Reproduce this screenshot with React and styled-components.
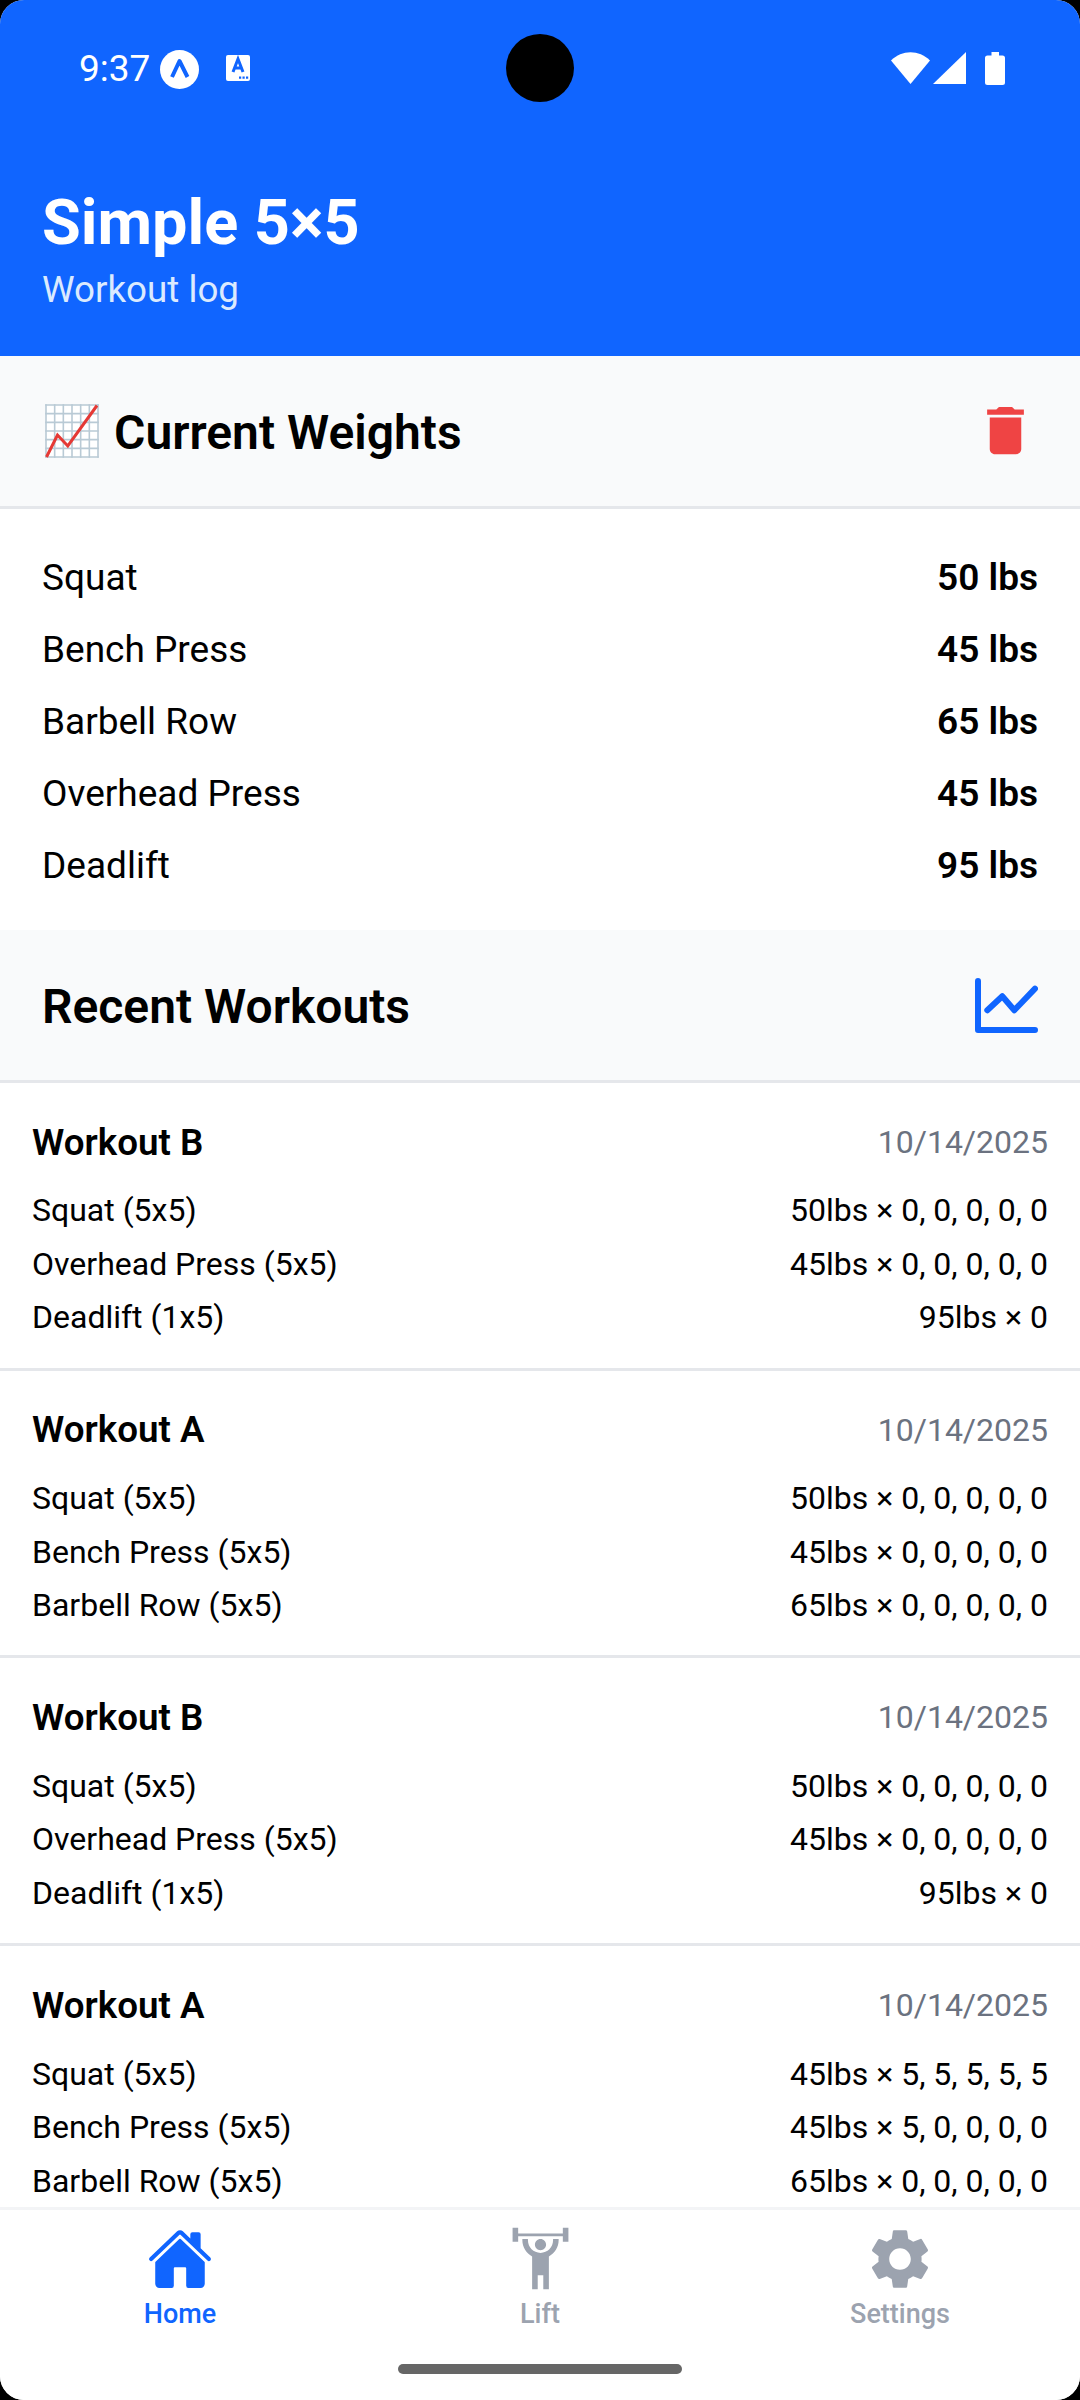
import React from "react";
import styled, { createGlobalStyle } from "styled-components";
import { IoHome } from "react-icons/io5";
import { MdDelete, MdSettings } from "react-icons/md";

const GlobalStyle = createGlobalStyle`
  html, body {
    margin: 0;
    padding: 0;
    background: #000;
  }
  * {
    box-sizing: border-box;
  }
`;

const weights = [
  { name: "Squat", value: "50 lbs" },
  { name: "Bench Press", value: "45 lbs" },
  { name: "Barbell Row", value: "65 lbs" },
  { name: "Overhead Press", value: "45 lbs" },
  { name: "Deadlift", value: "95 lbs" },
];

const workouts = [
  {
    title: "Workout B",
    rows: [
      ["Squat (5x5)", "50lbs × 0, 0, 0, 0, 0"],
      ["Overhead Press (5x5)", "45lbs × 0, 0, 0, 0, 0"],
      ["Deadlift (1x5)", "95lbs × 0"],
    ],
  },
  {
    title: "Workout A",
    rows: [
      ["Squat (5x5)", "50lbs × 0, 0, 0, 0, 0"],
      ["Bench Press (5x5)", "45lbs × 0, 0, 0, 0, 0"],
      ["Barbell Row (5x5)", "65lbs × 0, 0, 0, 0, 0"],
    ],
  },
  {
    title: "Workout B",
    rows: [
      ["Squat (5x5)", "50lbs × 0, 0, 0, 0, 0"],
      ["Overhead Press (5x5)", "45lbs × 0, 0, 0, 0, 0"],
      ["Deadlift (1x5)", "95lbs × 0"],
    ],
  },
  {
    title: "Workout A",
    rows: [
      ["Squat (5x5)", "45lbs × 5, 5, 5, 5, 5"],
      ["Bench Press (5x5)", "45lbs × 5, 0, 0, 0, 0"],
      ["Barbell Row (5x5)", "65lbs × 0, 0, 0, 0, 0"],
    ],
  },
];

const ChartEmoji = () => {
  const lines = [1, 9.67, 18.33, 27, 35.67, 44.33, 53];
  return (
    <svg width="54" height="54" viewBox="0 0 54 54">
      <rect x="1" y="1" width="52" height="52" fill="#fff" />
      {lines.map((p) => (
        <g key={p} stroke="#b9cad5" strokeWidth="1.6">
          <line x1={p} y1="0.2" x2={p} y2="53.8" />
          <line x1="0.2" y1={p} x2="53.8" y2={p} />
        </g>
      ))}
      <path d="M1.500 53 L12.500 31 L22.800 42 L52 1.500" fill="none" stroke="#e53935" strokeWidth="3" />
    </svg>
  );
};

const TrendIcon = () => (
  <svg width="63" height="55" viewBox="0 0 63 55" fill="none" stroke="#1065ff" strokeWidth="6" strokeLinecap="round" strokeLinejoin="round">
    <path d="M3 3 V52 H60" />
    <path d="M12.300 32.300 L27.300 18.300 L39.300 32.300 L60 10.600" />
  </svg>
);

const LifterIcon = ({ color }) => (
  <svg width="67" height="67" viewBox="0 0 24 24" fill={color}>
    <path d="M12 5C10.89 5 10 5.89 10 7S10.89 9 12 9 14 8.11 14 7 13.11 5 12 5M22 1V6H20V4H4V6H2V1H4V3H20V1H22M15 11.26V23H13V18H11V23H9V11.26C6.93 10.17 5.5 8 5.5 5.5L5.5 5H7.5L7.5 5.5C7.5 8 9.5 10 12 10S16.5 8 16.5 5.5L16.5 5H18.5L18.5 5.5C18.5 8 17.07 10.17 15 11.26Z" />
  </svg>
);

const ExpoBadge = () => (
  <BadgeSvg width="39" height="39" viewBox="0 0 39 39">
    <circle cx="19.500" cy="19.500" r="19.500" fill="#fff" />
    <path d="M12 27 L19.500 11 L27.500 27" fill="none" stroke="#1065ff" strokeWidth="4" strokeLinejoin="round" />
  </BadgeSvg>
);

const KeyboardBadge = () => (
  <svg width="24" height="26" viewBox="0 0 24 26">
    <rect width="24" height="26" rx="2" fill="#fff" />
    <path d="M7 17 L12 4 L17 17 M9 13 H15" fill="none" stroke="#1065ff" strokeWidth="3" />
    <path d="M13 21.500h2.200v2.200h-2.200zM16.500 21.500h2.200v2.200h-2.200zM20 21.500h2.200v2.200h-2.200z" fill="#1065ff" />
  </svg>
);

const SignalIcons = () => (
  <svg width="114" height="33" viewBox="0 0 114 33">
    <path d="M0 8.500 C 11 -2.500 28 -2.500 39 8.500 L19.500 32 Z" fill="#fff" />
    <path d="M42 32 L75 0 V32 Z" fill="#fff" />
    <path d="M94 6 a2.500 2.500 0 0 1 2.500 -2.500 h4 v-3.500 h7.500 v3.500 h3.500 a2.500 2.500 0 0 1 2.500 2.500 v24.500 a2.500 2.500 0 0 1 -2.500 2.500 h-15 a2.500 2.500 0 0 1 -2.500 -2.500 Z" fill="#fff" />
  </svg>
);

const App = () => {
  return (
    <Screen>
      <GlobalStyle />
      <Header>
        <StatusBar>
          <StatusLeft>
            <Clock>9:37</Clock>
            <ExpoBadge />
            <KeyboardSlot>
              <KeyboardBadge />
            </KeyboardSlot>
          </StatusLeft>
          <Camera />
          <SignalIcons />
        </StatusBar>
        <Title>Simple 5×5</Title>
        <Subtitle>Workout log</Subtitle>
      </Header>

      <Main>
        <SectionHeader>
          <SectionTitle>
            <EmojiSlot>
              <ChartEmoji />
            </EmojiSlot>
            <TitleText>Current Weights</TitleText>
          </SectionTitle>
          <TrashButton>
            <MdDelete size={63} color="#ef4444" />
          </TrashButton>
        </SectionHeader>
        <WeightList>
          {weights.map((w) => (
            <WeightRow key={w.name}>
              <span>{w.name}</span>
              <WeightValue>{w.value}</WeightValue>
            </WeightRow>
          ))}
        </WeightList>

        <SectionHeader>
          <SectionTitle>
            <TitleText>Recent Workouts</TitleText>
          </SectionTitle>
          <TrendIcon />
        </SectionHeader>
        {workouts.map((workout, i) => (
          <WorkoutCard key={i}>
            <CardTop>
              <CardTitle>{workout.title}</CardTitle>
              <CardDate>10/14/2025</CardDate>
            </CardTop>
            {workout.rows.map(([name, sets]) => (
              <SetRow key={name}>
                <span>{name}</span>
                <span>{sets}</span>
              </SetRow>
            ))}
          </WorkoutCard>
        ))}
      </Main>

      <TabBar>
        <Tab>
          <TabIcon>
            <IoHome size={66} color="#1065ff" />
          </TabIcon>
          <TabLabel $active>Home</TabLabel>
        </Tab>
        <Tab>
          <TabIcon>
            <LifterIcon color="#9ca3af" />
          </TabIcon>
          <TabLabel>Lift</TabLabel>
        </Tab>
        <Tab>
          <TabIcon>
            <MdSettings size={72} color="#9ca3af" />
          </TabIcon>
          <TabLabel>Settings</TabLabel>
        </Tab>
      </TabBar>
      <HomeArea>
        <HomeIndicator />
      </HomeArea>
    </Screen>
  );
};

const Screen = styled.div`
  width: 1080px;
  height: 2400px;
  display: flex;
  flex-direction: column;
  overflow: hidden;
  background: #fff;
  border-radius: 24px;
  font-family: Roboto, "Noto Sans", sans-serif;
  color: #000;
`;

const Header = styled.header`
  height: 356px;
  flex-shrink: 0;
  background: #1065ff;
  padding: 34px 42px 0;
  color: #fff;
`;

const StatusBar = styled.div`
  position: relative;
  height: 68px;
  display: flex;
  align-items: center;
  justify-content: space-between;
  padding: 0 33px 0 37px;
  margin-bottom: 88px;
`;

const StatusLeft = styled.div`
  display: flex;
  align-items: center;
  gap: 10px;
`;

const BadgeSvg = styled.svg`
  margin-top: 2px;
`;

const Clock = styled.span`
  font-size: 37px;
  font-weight: 400;
`;

const KeyboardSlot = styled.span`
  display: flex;
  margin-left: 17px;
`;

const Camera = styled.div`
  position: absolute;
  left: 464px;
  top: 0;
  width: 68px;
  height: 68px;
  border-radius: 50%;
  background: #000;
`;

const Title = styled.h1`
  margin: 0;
  font-size: 63px;
  line-height: 66px;
  font-weight: 700;
`;

const Subtitle = styled.p`
  margin: 10px 0 0;
  font-size: 36.75px;
  line-height: 48px;
  color: #dbeafe;
`;

const Main = styled.main`
  flex: 1;
  min-height: 0;
  overflow: hidden;
`;

const SectionHeader = styled.div`
  height: 153px;
  display: flex;
  align-items: center;
  justify-content: space-between;
  padding: 0 42px;
  background: #f9fafb;
  border-bottom: 3px solid #e5e7eb;
`;

const SectionTitle = styled.h2`
  margin: 0;
  display: flex;
  align-items: center;
  gap: 15px;
  font-size: 48px;
  font-weight: 600;
`;

const TitleText = styled.span`
  padding-top: 2px;
`;

const EmojiSlot = styled.span`
  display: flex;
  margin-left: 3px;
`;

const TrashButton = styled.div`
  display: flex;
  margin: 0 1px 2px 0;
`;

const WeightList = styled.div`
  height: 421px;
  padding: 32px 42px 0;
`;

const WeightRow = styled.div`
  height: 72px;
  display: flex;
  align-items: center;
  justify-content: space-between;
  font-size: 37px;
`;

const WeightValue = styled.span`
  font-weight: 600;
`;

const WorkoutCard = styled.article`
  height: 287.700px;
  padding: 34px 32px 0;
  border-bottom: 3px solid #e5e7eb;
`;

const CardTop = styled.div`
  display: flex;
  align-items: center;
  justify-content: space-between;
  height: 50px;
  margin-bottom: 16.700px;
`;

const CardTitle = styled.h3`
  margin: 0;
  font-size: 36.75px;
  font-weight: 600;
`;

const CardDate = styled.span`
  font-size: 32px;
  color: #6b7280;
`;

const SetRow = styled.div`
  height: 53.500px;
  display: flex;
  align-items: center;
  justify-content: space-between;
  font-size: 32px;
`;

const TabBar = styled.nav`
  display: flex;
  flex-shrink: 0;
  height: 131px;
  padding-top: 12px;
  background: #fff;
  border-top: 3px solid #f3f4f6;
`;

const Tab = styled.div`
  flex: 1;
  display: flex;
  flex-direction: column;
  align-items: center;
`;

const TabIcon = styled.div`
  height: 73px;
  display: flex;
  align-items: center;
  justify-content: center;
`;

const TabLabel = styled.span`
  font-size: 27px;
  line-height: 38px;
  font-weight: 500;
  color: ${(p) => (p.$active ? "#1065ff" : "#9ca3af")};
`;

const HomeArea = styled.div`
  height: 62px;
  flex-shrink: 0;
  display: flex;
  justify-content: center;
  padding-top: 26px;
  background: #fff;
`;

const HomeIndicator = styled.div`
  width: 284px;
  height: 10px;
  border-radius: 5px;
  background: #666;
`;

export default App;
